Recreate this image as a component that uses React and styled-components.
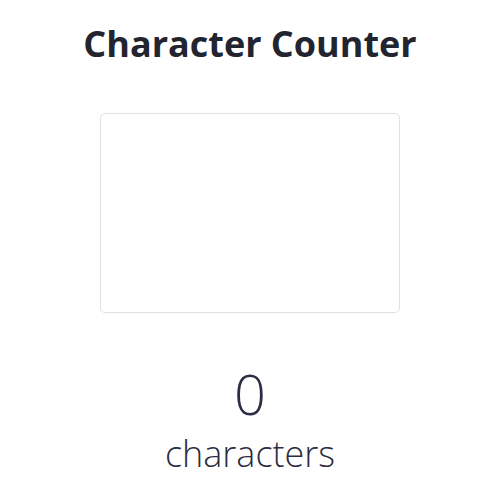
import React, { useState } from 'react';
import styled, { createGlobalStyle } from 'styled-components';

const GlobalStyle = createGlobalStyle`
  html, body {
    margin: 0;
    padding: 0;
    background: #fff;
  }
  body {
    font-family: "Open Sans", "Noto Sans", sans-serif;
    color: #212529;
  }
`;

const Container = styled.main`
  width: 500px;
  display: flex;
  flex-direction: column;
  align-items: center;
  padding-top: 22px;
`;

const Title = styled.h1`
  margin: 0;
  font-size: 36px;
  font-weight: 700;
  line-height: 44px;
  color: #22252f;
`;

const TextBox = styled.textarea`
  box-sizing: border-box;
  width: 300px;
  height: 200px;
  margin-top: 47px;
  border: 1px solid #dee2e6;
  border-radius: 5px;
  padding: 6px 12px;
  resize: none;
  font-family: inherit;
  font-size: 16px;
  outline: none;
`;

const Count = styled.div`
  margin-top: 47px;
  font-size: 56px;
  font-weight: 300;
  line-height: 66px;
  color: #2b2d42;
`;

const Label = styled.div`
  font-size: 36px;
  font-weight: 300;
  line-height: 56px;
  color: #2b2d42;
`;

const App = () => {
  const [text, setText] = useState('');
  return (
    <Container>
      <GlobalStyle />
      <Title>Character Counter</Title>
      <TextBox value={text} onChange={(e) => setText(e.target.value)} />
      <Count>{text.length}</Count>
      <Label>characters</Label>
    </Container>
  );
};

export default App;
